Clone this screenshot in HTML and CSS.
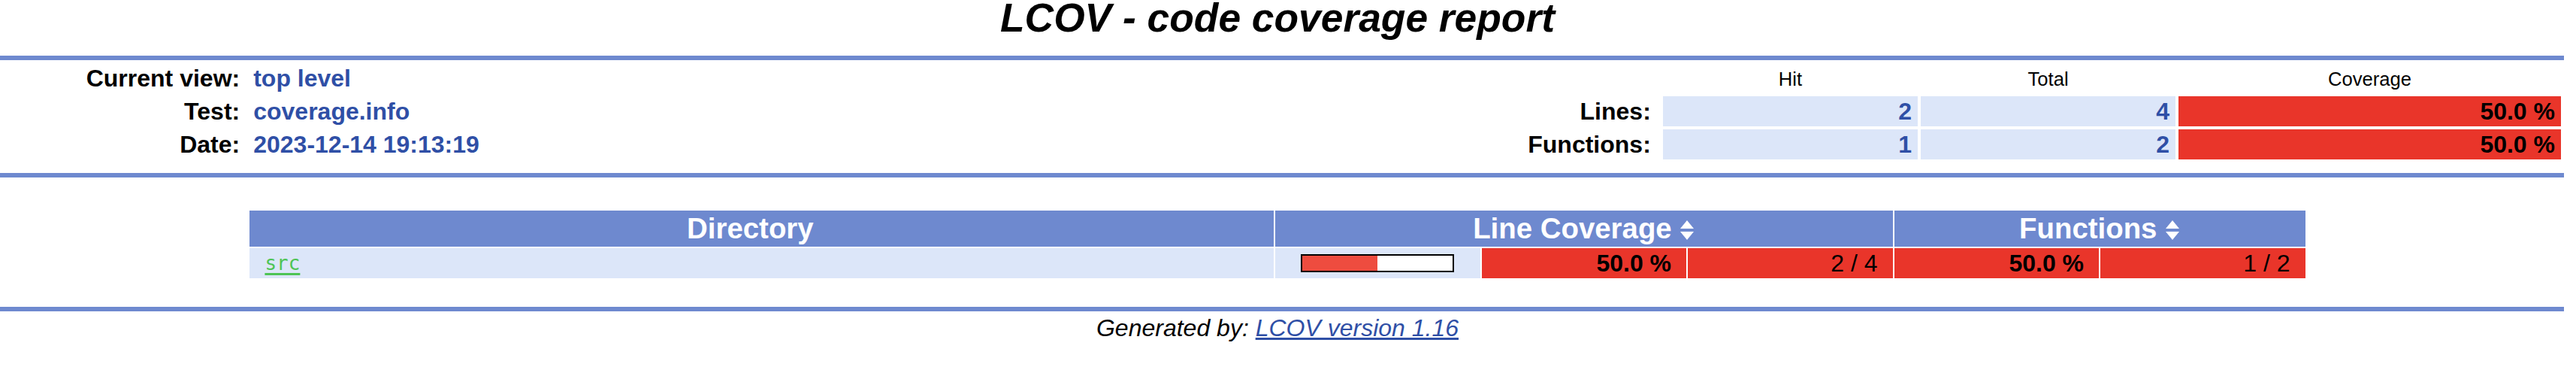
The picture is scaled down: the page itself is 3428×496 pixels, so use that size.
FILE: index.html
```html
<!DOCTYPE html>
<html lang="en">
<head>
<meta charset="utf-8">
<title>LCOV - coverage.info</title>
<link rel="stylesheet" href="styles.css">
</head>
<body>
  <div class="title">LCOV - code coverage report</div>
  <div class="ruler"></div>

  <table class="summary">
    <colgroup>
      <col class="c10"><col class="c35"><col class="c5"><col class="c15"><col class="c10"><col class="c10"><col class="c15">
    </colgroup>
    <tr>
      <td class="headerItem">Current view:</td>
      <td class="headerValue">top level</td>
      <td></td>
      <td></td>
      <td class="covHead">Hit</td>
      <td class="covHead">Total</td>
      <td class="covHead">Coverage</td>
    </tr>
    <tr>
      <td class="headerItem">Test:</td>
      <td class="headerValue">coverage.info</td>
      <td></td>
      <td class="headerItem">Lines:</td>
      <td class="covEntry">2</td>
      <td class="covEntry">4</td>
      <td class="covEntryLo">50.0 %</td>
    </tr>
    <tr>
      <td class="headerItem">Date:</td>
      <td class="headerValue">2023-12-14 19:13:19</td>
      <td></td>
      <td class="headerItem">Functions:</td>
      <td class="covEntry">1</td>
      <td class="covEntry">2</td>
      <td class="covEntryLo">50.0 %</td>
    </tr>
    <tr class="spacer"><td colspan="7"></td></tr>
  </table>

  <div class="ruler"></div>

  <table class="list">
    <colgroup>
      <col class="l50"><col class="l10"><col class="l10"><col class="l10"><col class="l10"><col class="l10">
    </colgroup>
    <tr class="gap"><td colspan="6"></td></tr>
    <tr>
      <td class="tableHead">Directory <svg class="sort" width="20" height="28" viewBox="0 0 20 28" aria-hidden="true"></svg></td>
      <td class="tableHead" colspan="3">Line Coverage <svg class="sort" width="20" height="28" viewBox="0 0 20 28"><polygon points="10,1 19,12 1,12" fill="#ffffff"/><polygon points="1,16 19,16 10,27" fill="#ffffff"/></svg></td>
      <td class="tableHead" colspan="2">Functions <svg class="sort" width="20" height="28" viewBox="0 0 20 28"><polygon points="10,1 19,12 1,12" fill="#ffffff"/><polygon points="1,16 19,16 10,27" fill="#ffffff"/></svg></td>
    </tr>
    <tr>
      <td class="coverFile"><a class="visited" href="#src">src</a></td>
      <td class="coverBar">
        <div class="bar"><span class="bar-hit" style="width: 100px"></span><span class="bar-miss" style="width: 100px"></span></div>
      </td>
      <td class="coverPerLo">50.0&nbsp;%</td>
      <td class="coverNumLo">2 / 4</td>
      <td class="coverPerLo">50.0&nbsp;%</td>
      <td class="coverNumLo">1 / 2</td>
    </tr>
  </table>

  <div class="linebreak"></div>
  <div class="ruler"></div>
  <div class="versionInfo">Generated by: <a class="lcov" href="#lcov">LCOV version 1.16</a></div>
</body>
</html>
```

FILE: styles.css
```css
html, body {
  background: #ffffff;
}

body {
  margin: -7px 16px 0 -12px;
  color: #000000;
  font-family: "Liberation Sans", Arial, sans-serif;
  font-size: 32px;
  line-height: 36px;
}

.title {
  text-align: center;
  padding-bottom: 20px;
  font-size: 53.33px;
  line-height: 61px;
  font-style: italic;
  font-weight: bold;
}

.ruler {
  height: 6px;
  background: #6e89cf;
}

/* summary header table */
.summary {
  width: 100%;
  border-collapse: separate;
  border-spacing: 4px;
}

.summary td {
  padding: 2px;
  white-space: nowrap;
}

.c5 { width: 5%; }
.c10 { width: 10%; }
.c15 { width: 15%; }
.c35 { width: 35%; }

.summary td.headerItem {
  text-align: right;
  padding-right: 12px;
  font-weight: bold;
  vertical-align: top;
}

.summary td.headerValue {
  text-align: left;
  color: #2f4fa6;
  font-weight: bold;
}

.summary td.covHead {
  text-align: center;
  padding: 2px 12px 0;
  font-size: 25.6px;
}

.summary td.covEntry {
  text-align: right;
  color: #2f4fa6;
  font-weight: bold;
  padding-left: 24px;
  padding-right: 8px;
  background: #dce6f9;
}

.summary td.covEntryLo {
  text-align: right;
  color: #000000;
  font-weight: bold;
  padding-left: 24px;
  padding-right: 8px;
  background: #e9352a;
}

.summary .spacer td {
  height: 6px;
  padding: 2px;
  line-height: 6px;
}

/* directory list table */
.list {
  width: 80%;
  margin: 0 auto;
  border-collapse: separate;
  border-spacing: 2px;
}

.list td {
  padding: 2px;
}

.l50 { width: 50%; }
.l10 { width: 10%; }

.list .gap td {
  height: 36px;
}

.list td.tableHead {
  text-align: center;
  color: #ffffff;
  background: #6e89cf;
  font-size: 38.4px;
  line-height: 44px;
  font-weight: bold;
  white-space: nowrap;
  padding-left: 8px;
  padding-right: 8px;
}

.sort {
  vertical-align: -3px;
}

.list td.coverFile {
  text-align: left;
  padding-left: 20px;
  padding-right: 40px;
  background: #dce6f9;
  font-family: "DejaVu Sans Mono", "Liberation Mono", monospace;
  font-size: 26px;
}

a.visited {
  color: #4ec455;
  text-decoration: underline;
  text-decoration-thickness: 3px;
  text-underline-offset: 4px;
}

.list td.coverBar {
  padding-left: 20px;
  padding-right: 20px;
  background: #dce6f9;
}

.bar {
  display: flex;
  width: max-content;
  margin: 0 auto;
  padding: 2px;
  background: #000000;
}

.bar-hit {
  display: block;
  height: 20px;
  background: #ee4c3f;
}

.bar-miss {
  display: block;
  height: 20px;
  background: #ffffff;
}

.list td.coverPerLo {
  text-align: right;
  padding-left: 20px;
  padding-right: 20px;
  background: #e9352a;
  font-weight: bold;
}

.list td.coverNumLo {
  text-align: right;
  padding-left: 20px;
  padding-right: 20px;
  background: #e9352a;
  white-space: nowrap;
}

.linebreak {
  height: 36px;
}

.versionInfo {
  text-align: center;
  padding-top: 4px;
  font-style: italic;
}

a.lcov {
  color: #2f4fa6;
  text-decoration: underline;
}
```
